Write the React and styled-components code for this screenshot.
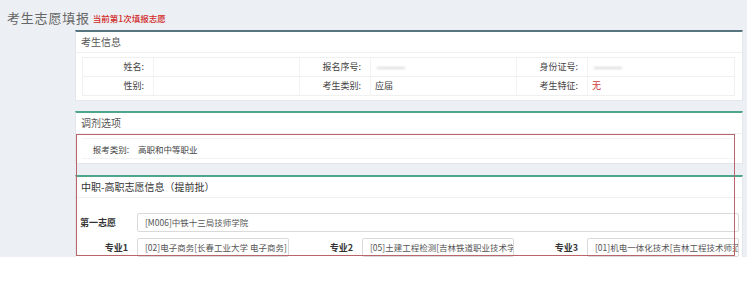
import styled, { createGlobalStyle } from "styled-components";

const GlobalStyle = createGlobalStyle`
  html, body {
    margin: 0;
    padding: 0;
    background: #fff;
    font-family: "Noto Sans CJK SC", "Noto Sans", sans-serif;
  }
`;

const infoRows = [
  [
    { label: "姓名:", value: "" },
    { label: "报名序号:", value: "", hidden: true },
    { label: "身份证号:", value: "", hidden: true },
  ],
  [
    { label: "性别:", value: "" },
    { label: "考生类别:", value: "应届" },
    { label: "考生特征:", value: "无", red: true },
  ],
];

const majors = [
  { label: "专业1", value: "[02]电子商务[长春工业大学 电子商务]" },
  { label: "专业2", value: "[05]土建工程检测[吉林铁道职业技术学院]" },
  { label: "专业3", value: "[01]机电一体化技术[吉林工程技术师范学院]" },
];

export default function App() {
  return (
    <>
      <GlobalStyle />
      <Page>
        <TitleBar>
          <Title>考生志愿填报</Title>
          <Notice>当前第1次填报志愿</Notice>
        </TitleBar>

        <Content>
          <Panel $accent="#56757f">
            <PanelHeader>考生信息</PanelHeader>
            <PanelBody>
              <InfoTable>
                {infoRows.map((row, i) => (
                  <InfoRow key={i} $last={i === infoRows.length - 1}>
                    {row.map((cell) => (
                      <InfoCell key={cell.label}>
                        <InfoLabel>{cell.label}</InfoLabel>
                        <InfoValue $red={cell.red}>
                          {cell.hidden ? <Redacted /> : cell.value}
                        </InfoValue>
                      </InfoCell>
                    ))}
                  </InfoRow>
                ))}
              </InfoTable>
            </PanelBody>
          </Panel>

          <Panel $accent="#4fa68c">
            <PanelHeader>调剂选项</PanelHeader>
            <PanelBody>
              <OptionRow>
                <OptionLabel>报考类别:</OptionLabel>
                <span>高职和中等职业</span>
              </OptionRow>
            </PanelBody>
          </Panel>

          <Panel $accent="#4fa68c">
            <PanelHeader $strong>中职-高职志愿信息（提前批）</PanelHeader>
            <WishBody>
              <WishLabel>第一志愿</WishLabel>
              <WideInput>[M006]中铁十三局技师学院</WideInput>
              {majors.map((m) => (
                <MajorPair key={m.label}>
                  <MajorLabel>{m.label}</MajorLabel>
                  <Field>{m.value}</Field>
                </MajorPair>
              ))}
            </WishBody>
          </Panel>
        </Content>

        <Highlight />
      </Page>
    </>
  );
}

const Page = styled.div`
  position: relative;
  height: 257px;
  overflow: hidden;
  background: #eceff3;
  padding-top: 8px;
  box-sizing: border-box;
`;

const TitleBar = styled.div`
  display: flex;
  align-items: center;
  height: 22px;
  padding-left: 7px;
  margin-top: -2px;
  gap: 3px;
`;

const Title = styled.h1`
  margin: 0;
  font-size: 13px;
  font-weight: 400;
  letter-spacing: 0.8px;
  color: #666;
`;

const Notice = styled.span`
  font-size: 8.5px;
  color: #d22a2a;
  font-weight: 500;
  padding-top: 2px;
`;

const Content = styled.div`
  margin-left: 75px;
  width: 668px;
  display: flex;
  flex-direction: column;
  gap: 10px;
  padding-top: 2px;
`;

const Panel = styled.section`
  background: #fff;
  border: 1px solid #e3e6ea;
  border-top: 2px solid ${(p) => p.$accent};
  & + & + & {
    margin-top: 1px;
  }
`;

const PanelHeader = styled.div`
  height: 20px;
  line-height: 20px;
  padding-left: 5px;
  font-size: 10px;
  color: ${(p) => (p.$strong ? "#333" : "#555")};
  border-bottom: 1px solid #eef0f2;
`;

const PanelBody = styled.div`
  padding: 4px 7px 4px 6px;
`;

const InfoTable = styled.div`
  border: 1px solid #f0f0f0;
`;

const InfoRow = styled.div`
  display: grid;
  grid-template-columns: repeat(3, 1fr);
  height: 18px;
  border-bottom: ${(p) => (p.$last ? "none" : "1px solid #f0f0f0")};
`;

const InfoCell = styled.div`
  display: grid;
  grid-template-columns: 71px 1fr;
  border-right: 1px solid #f3f3f3;
  &:last-child {
    border-right: none;
  }
`;

const InfoLabel = styled.div`
  font-size: 9px;
  color: #444;
  text-align: right;
  padding-right: 9px;
  line-height: 18px;
  border-right: 1px solid #f3f3f3;
`;

const InfoValue = styled.div`
  font-size: 9px;
  line-height: 18px;
  padding-left: 4px;
  color: ${(p) => (p.$red ? "#d23a3a" : "#444")};
`;

const Redacted = styled.span`
  display: inline-block;
  width: 28px;
  height: 2px;
  margin-left: 2px;
  vertical-align: middle;
  background: #dcdcdc;
  filter: blur(0.8px);
`;

const OptionRow = styled.div`
  display: flex;
  align-items: center;
  height: 19px;
  border-top: 1px solid #f3f3f3;
  border-bottom: 1px solid #f3f3f3;
  font-size: 8.5px;
  color: #444;
`;

const OptionLabel = styled.span`
  width: 47px;
  text-align: right;
  margin-right: 9px;
`;

const WishBody = styled.div`
  display: grid;
  grid-template-columns: 57px 152px 73px 152px 73px 152px;
  row-gap: 6px;
  padding: 15px 3px 10px 4px;
  align-items: center;
`;

const WishLabel = styled.div`
  font-size: 9px;
  font-weight: 700;
  color: #333;
`;

const Field = styled.div`
  height: 17px;
  line-height: 17px;
  border: 1px solid #dadada;
  border-radius: 2px;
  background: #fff;
  padding-left: 7px;
  font-size: 8.5px;
  color: #555;
  white-space: nowrap;
  overflow: hidden;
`;

const WideInput = styled(Field)`
  grid-column: 2 / -1;
`;

const MajorPair = styled.div`
  display: contents;
`;

const MajorLabel = styled.div`
  font-size: 9px;
  font-weight: 700;
  color: #333;
  text-align: right;
  padding-right: 9px;
`;

const Highlight = styled.div`
  position: absolute;
  left: 76px;
  top: 134px;
  width: 657px;
  height: 120px;
  border: 1px solid #b8656b;
  pointer-events: none;
`;
